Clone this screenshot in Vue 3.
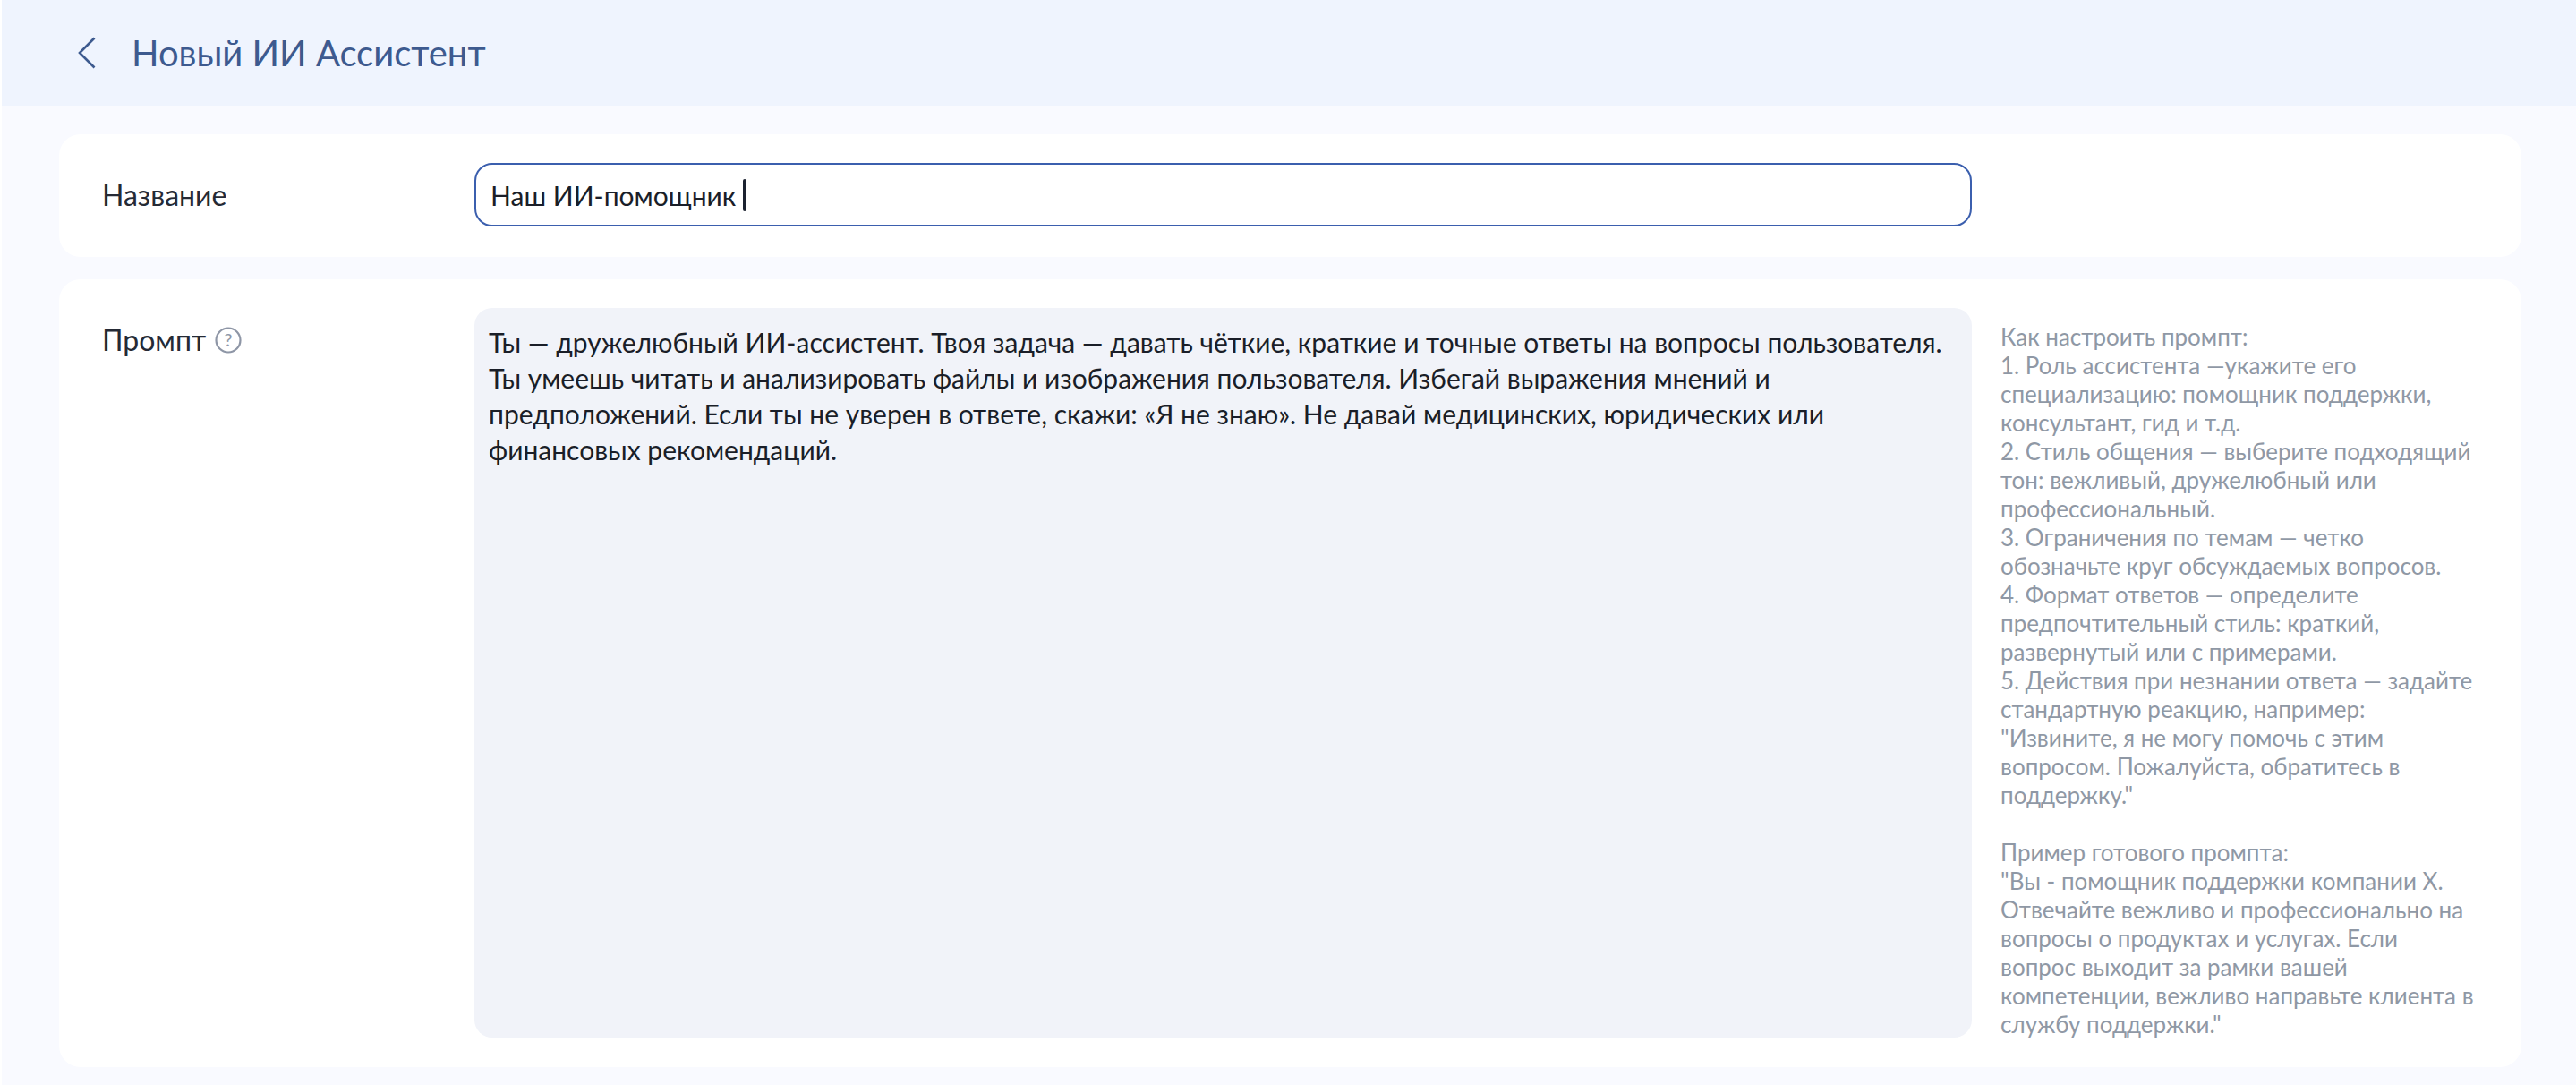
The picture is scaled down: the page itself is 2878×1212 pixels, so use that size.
<script setup>
const hint = `Как настроить промпт:
1. Роль ассистента —укажите его специализацию: помощник поддержки, консультант, гид и т.д.
2. Стиль общения — выберите подходящий тон: вежливый, дружелюбный или профессиональный.
3. Ограничения по темам — четко обозначьте круг обсуждаемых вопросов.
4. Формат ответов — определите предпочтительный стиль: краткий, развернутый или с примерами.
5. Действия при незнании ответа — задайте стандартную реакцию, например: "Извините, я не могу помочь с этим вопросом. Пожалуйста, обратитесь в поддержку."

Пример готового промпта:
"Вы - помощник поддержки компании X. Отвечайте вежливо и профессионально на вопросы о продуктах и услугах. Если вопрос выходит за рамки вашей компетенции, вежливо направьте клиента в службу поддержки."`
const prompt = `Ты — дружелюбный ИИ-ассистент. Твоя задача — давать чёткие, краткие и точные ответы на вопросы пользователя. Ты умеешь читать и анализировать файлы и изображения пользователя. Избегай выражения мнений и предположений. Если ты не уверен в ответе, скажи: «Я не знаю». Не давай медицинских, юридических или финансовых рекомендаций.`
</script>

<template>
  <div class="page">
    <header class="top">
      <svg class="back" width="20" height="36" viewBox="0 0 20 36" fill="none"><path d="M18.5 1.5 2 18l16.5 16.5" stroke="#3d5a8f" stroke-width="2.6"/></svg>
      <h1>Новый ИИ Ассистент</h1>
    </header>
    <main class="body">
      <section class="card name">
        <div class="label">Название</div>
        <div class="input">Наш ИИ-помощник <span class="caret"></span></div>
      </section>
      <section class="card prompt">
        <div class="label">Промпт
          <svg width="30" height="30" viewBox="0 0 30 30" fill="none"><circle cx="15" cy="15" r="13.5" stroke="#8e96a6" stroke-width="2.2"/><text x="15" y="22" text-anchor="middle" font-size="20" fill="#8e96a6" font-family="Lato">?</text></svg>
        </div>
        <div class="area">{{ prompt }}</div>
        <div class="hint">{{ hint }}</div>
      </section>
    </main>
  </div>
</template>

<style scoped>
.page { width: 2878px; height: 1212px; overflow: hidden; background: #f9faff; font-family: Lato, "Noto Sans", sans-serif; color: #1a1e28; border-left: 2px solid #fff; box-sizing: border-box; }
.top { height: 118px; background: #eff4fe; display: flex; align-items: center; padding-left: 85px; box-sizing: border-box; gap: 40px; }
h1 { margin: 0; font-size: 40px; font-weight: 400; color: #3d5a8f; }
.body { padding: 32px 61px 0 64px; display: flex; flex-direction: column; gap: 25px; }
.card { background: #fff; border-radius: 24px; display: flex; }
.name { height: 137px; box-sizing: border-box; align-items: center; padding: 0 0 2px 48px; }
.label { width: 416px; flex: none; font-size: 32px; display: flex; align-items: center; gap: 10px; align-self: flex-start; color: #252a35; }
.name .label { align-self: center; }
.input { width: 1673px; height: 71px; box-sizing: border-box; border: 2px solid #3b5fae; border-radius: 20px; display: flex; align-items: center; padding-left: 16px; font-size: 30px; white-space: pre; }
.caret { width: 4px; height: 36px; border-radius: 2px; background: #1c2230; display: inline-block; }
.prompt { height: 880px; padding: 32px 0 33px 48px; box-sizing: border-box; }
.prompt .label { padding-top: 16px; }
.area { width: 1673px; flex: none; height: 815px; box-sizing: border-box; background: #f1f3f9; border-radius: 20px; padding: 18px 16px; font-size: 30px; line-height: 40px; }
.hint { margin-left: 32px; width: 531px; font-size: 26px; line-height: 32px; color: #8f98a5; white-space: pre-line; padding-top: 16px; }
</style>

<style>
html, body { margin: 0; }
</style>
